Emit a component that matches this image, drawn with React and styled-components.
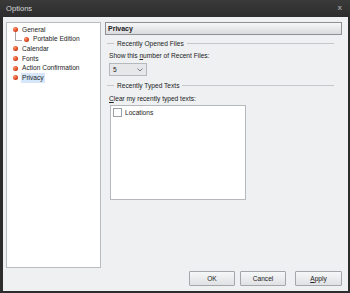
import styled, { createGlobalStyle } from "styled-components";

const GlobalStyle = createGlobalStyle`
	html, body {
		margin: 0;
		padding: 0;
		overflow: hidden;
		background: #2c2c2c;
	}
	body {
		font-family: "Liberation Sans", Arial, sans-serif;
		font-size: 6.6px;
		color: #222;
	}
`;

const menuItems = [
	{ label: "General", level: 0 },
	{ label: "Portable Edition", level: 1 },
	{ label: "Calendar", level: 0 },
	{ label: "Fonts", level: 0 },
	{ label: "Action Confirmation", level: 0 },
	{ label: "Privacy", level: 0, selected: true },
];

const Window = styled.div`
	width: 350px;
	height: 293px;
	box-sizing: border-box;
	display: flex;
	flex-direction: column;
	background: linear-gradient(#3a3a3a, #2d2d2d 17px, #2d2d2d);
	padding: 0 2px 2px 3px;
`;

const TitleBar = styled.div`
	height: 17px;
	flex: none;
	display: flex;
	align-items: center;
	justify-content: space-between;
	padding: 0 6px 0 3px;
	color: #d8d8d8;
	font-size: 7.6px;
`;

const CloseButton = styled.span`
	color: #9a9a9a;
	font-size: 8px;
	font-weight: bold;
	margin-top: -2px;
`;

const Client = styled.div`
	flex: 1;
	background: #eef0f2;
	display: grid;
	grid-template-columns: 95px 1fr;
	grid-template-rows: 246px 1fr;
	column-gap: 4px;
	padding: 5px 6px 0 3px;
`;

const Tree = styled.ul`
	margin: 0;
	padding: 2px 0 0 0;
	list-style: none;
	background: #fff;
	border: 1px solid #b9bcc1;
	box-sizing: border-box;
`;

const TreeRow = styled.li`
	position: relative;
	height: 9.6px;
	display: flex;
	align-items: center;
	padding-left: ${(p) => (p.$level ? 17 : 6)}px;
`;

const Elbow = styled.span`
	position: absolute;
	left: 8px;
	top: -3px;
	width: 6px;
	height: 8px;
	border-left: 1px solid #a6a6a6;
	border-bottom: 1px solid #a6a6a6;
`;

const Bullet = styled.span`
	width: 5px;
	height: 5px;
	border-radius: 50%;
	background: radial-gradient(circle at 35% 35%, #ff9a70, #d6401c 60%, #a8290c);
	margin-right: 4px;
	flex: none;
`;

const TreeLabel = styled.span`
	padding: 1px 1px;
	margin-left: -1px;
	background: ${(p) => (p.$selected ? "#d6e7fb" : "transparent")};
	line-height: 8px;
	white-space: nowrap;
`;

const Panel = styled.div`
	display: flex;
	flex-direction: column;
`;

const PanelHeader = styled.div`
	height: 13px;
	box-sizing: border-box;
	border: 1px solid #8e9094;
	background: linear-gradient(#f7f7f8, #dadbdd);
	font-weight: bold;
	font-size: 7px;
	display: flex;
	align-items: center;
	padding-left: 2px;
`;

const GroupTitle = styled.div`
	display: flex;
	align-items: center;
	gap: 3px;
	margin: ${(p) => p.$top}px 8px 0 2px;
	height: 9px;

	&::before {
		content: "";
		width: 7px;
		border-top: 1px solid #c5c7ca;
	}

	&::after {
		content: "";
		flex: 1;
		border-top: 1px solid #c5c7ca;
	}
`;

const Caption = styled.div`
	margin: ${(p) => p.$top || 3}px 0 0 4px;
	height: 9px;
	line-height: 9px;
	white-space: nowrap;
`;

const Combo = styled.div`
	width: 38px;
	height: 13px;
	box-sizing: border-box;
	margin: 3px 0 0 4px;
	border: 1px solid #b5b8bd;
	background: #e6e7e9;
	display: flex;
	align-items: center;
	justify-content: space-between;
	padding: 0 3px 0 3px;
`;

const Chevron = styled.svg`
	width: 6px;
	height: 4px;
`;

const ListBox = styled.div`
	width: 136px;
	height: 95px;
	box-sizing: border-box;
	margin: 2px 0 0 5px;
	border: 1px solid #b5b8bd;
	background: #fff;
	padding: 2px 2px;
`;

const CheckRow = styled.label`
	display: flex;
	align-items: center;
	gap: 3px;
	height: 9px;
`;

const CheckBox = styled.span`
	width: 7px;
	height: 7px;
	border: 1px solid #9da1a6;
	background: #fff;
	flex: none;
`;

const ButtonRow = styled.div`
	grid-column: 2;
	display: flex;
	justify-content: flex-end;
	align-items: flex-start;
	padding-top: 3px;
`;

const Button = styled.button`
	width: ${(p) => p.$width || 46}px;
	height: 15px;
	margin-left: ${(p) => p.$gap || 0}px;
	box-sizing: border-box;
	border: 1px solid #a3a6ab;
	border-radius: 1px;
	background: linear-gradient(#f6f7f8, #dfe1e4);
	font-family: "Liberation Sans", Arial, sans-serif;
	font-size: 6.6px;
	color: #222;
	padding: 0;
`;

function App() {
	return (
		<>
			<GlobalStyle />
			<Window>
				<TitleBar>
					<span>Options</span>
					<CloseButton>x</CloseButton>
				</TitleBar>
				<Client>
					<Tree>
						{menuItems.map((item, indice) => (
							<TreeRow key={indice} $level={item.level}>
								{item.level > 0 && <Elbow />}
								<Bullet />
								<TreeLabel $selected={item.selected}>{item.label}</TreeLabel>
							</TreeRow>
						))}
					</Tree>
					<Panel>
						<PanelHeader>Privacy</PanelHeader>
						<GroupTitle $top={4}>Recently Opened Files</GroupTitle>
						<Caption>
							Show this <u>n</u>umber of Recent Files:
						</Caption>
						<Combo>
							<span>5</span>
							<Chevron viewBox="0 0 6 4">
								<path d="M0.5 0.5 L3 3 L5.5 0.5" fill="none" stroke="#6b6e73" strokeWidth="0.9" />
							</Chevron>
						</Combo>
						<GroupTitle $top={5}>Recently Typed Texts</GroupTitle>
						<Caption $top={4}>
							<u>C</u>lear my recently typed texts:
						</Caption>
						<ListBox>
							<CheckRow>
								<CheckBox />
								Locations
							</CheckRow>
						</ListBox>
					</Panel>
					<ButtonRow>
						<Button>OK</Button>
						<Button $gap={5}>Cancel</Button>
						<Button $gap={9} $width={47}>
							<u>A</u>pply
						</Button>
					</ButtonRow>
				</Client>
			</Window>
		</>
	);
}

export default App;
